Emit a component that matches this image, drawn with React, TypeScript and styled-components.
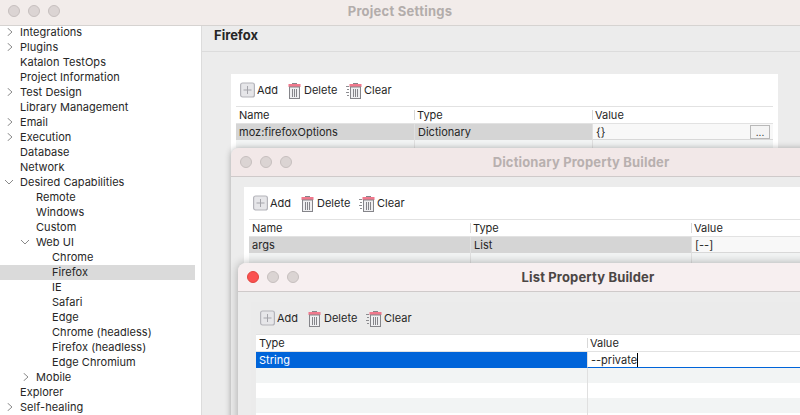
import { createGlobalStyle, styled } from "styled-components";

const GlobalStyle = createGlobalStyle`
	html, body {
		margin: 0;
		padding: 0;
		background: #ececec;
		font-family: "Inter", "Liberation Sans", sans-serif;
		font-size: 11px;
		color: #262626;
	}
`;

interface TreeItem {
	label: string;
	level: number;
	arrow?: "closed" | "open";
	selected?: boolean;
}

const Tree: TreeItem[] = [
	{ label: "Integrations", level: 0, arrow: "closed" },
	{ label: "Plugins", level: 0, arrow: "closed" },
	{ label: "Katalon TestOps", level: 0 },
	{ label: "Project Information", level: 0 },
	{ label: "Test Design", level: 0, arrow: "closed" },
	{ label: "Library Management", level: 0 },
	{ label: "Email", level: 0, arrow: "closed" },
	{ label: "Execution", level: 0, arrow: "closed" },
	{ label: "Database", level: 0 },
	{ label: "Network", level: 0 },
	{ label: "Desired Capabilities", level: 0, arrow: "open" },
	{ label: "Remote", level: 1 },
	{ label: "Windows", level: 1 },
	{ label: "Custom", level: 1 },
	{ label: "Web UI", level: 1, arrow: "open" },
	{ label: "Chrome", level: 2 },
	{ label: "Firefox", level: 2, selected: true },
	{ label: "IE", level: 2 },
	{ label: "Safari", level: 2 },
	{ label: "Edge", level: 2 },
	{ label: "Chrome (headless)", level: 2 },
	{ label: "Firefox (headless)", level: 2 },
	{ label: "Edge Chromium", level: 2 },
	{ label: "Mobile", level: 1, arrow: "closed" },
	{ label: "Explorer", level: 0 },
	{ label: "Self-healing", level: 0, arrow: "closed" },
];

const Arrow = ({ kind, level }: { kind: "closed" | "open"; level: number }) => (
	<ArrowSvg viewBox="0 0 8 8" $left={(kind === "closed" ? 6 : 5) + level * 16}>
		<path d={kind === "closed" ? "M1.5 0 L6 4 L1.5 8" : "M0 2 L4 6 L8 2"} fill="none" stroke="#8a8a8a" strokeWidth="1" />
	</ArrowSvg>
);

const AddIcon = () => (
	<ToolIcon width="15" height="16" viewBox="0 0 15 16">
		<rect x="0.6" y="1" width="13.8" height="14" rx="2" fill="#e6e6e9" stroke="#b4b4ba" strokeWidth="1.2" />
		<path d="M7.5 4 V12 M3.5 8 H11.5" stroke="#a4a4aa" strokeWidth="1" />
	</ToolIcon>
);

const BinShape = () => (
	<>
		<path d="M4 1.5 H9" stroke="#85858a" strokeWidth="1" />
		<rect x="0.5" y="2" width="12" height="3" fill="#f0788c" />
		<rect x="1.5" y="5" width="10" height="11.5" fill="#efeff1" stroke="#85858a" />
		<path d="M4.5 7 V15 M6.5 7 V15 M8.5 7 V15" stroke="#85858a" strokeWidth="1" />
	</>
);

const BinIcon = () => (
	<ToolIcon width="14" height="17" viewBox="0 0 14 17">
		<BinShape />
	</ToolIcon>
);

const ClearIcon = () => (
	<ToolIcon width="16" height="17" viewBox="0 0 16 17">
		<path d="M0 4.5 H3 M1 7.5 H3 M0 10.5 H3 M1 13.5 H3" stroke="#8c8c90" strokeWidth="1" />
		<g transform="translate(3 0)">
			<BinShape />
		</g>
	</ToolIcon>
);

const Toolbar = () => (
	<ToolRow>
		<ToolButton $width={48}><AddIcon />Add</ToolButton>
		<ToolButton $width={58}><BinIcon />Delete</ToolButton>
		<ToolButton $width={50}><ClearIcon />Clear</ToolButton>
	</ToolRow>
);

const Lights = ({ active }: { active?: boolean }) => (
	<LightRow>
		<Light $color={active ? "#fb5150" : undefined} />
		<Light />
		<Light />
	</LightRow>
);

const App = () => {
	return (
		<Desktop>
			<GlobalStyle />
			<MainWindow>
				<MainTitle>Project Settings</MainTitle>
				<MainLights><Lights /></MainLights>
				<MainBody>
					<Sidebar>
						{Tree.map((item) => (
							<TreeRow key={item.label} $level={item.level} $selected={item.selected}>
								{item.arrow && <Arrow kind={item.arrow} level={item.level} />}
								{item.label}
							</TreeRow>
						))}
					</Sidebar>
					<Content>
						<PageHeader>Firefox</PageHeader>
						<PagePanel>
							<Toolbar />
							<Table $columns="178px 178px 181px">
								<HeadCell>Name</HeadCell>
								<HeadCell>Type</HeadCell>
								<HeadCell>Value</HeadCell>
								<GreyCell>moz:firefoxOptions</GreyCell>
								<GreyCell>Dictionary</GreyCell>
								<ValueCell>
									{"{}"}
									<MoreButton>...</MoreButton>
								</ValueCell>
								<StripeCell />
								<StripeCell />
								<StripeCell />
							</Table>
						</PagePanel>
					</Content>
				</MainBody>
			</MainWindow>

			<Dialog $left={231} $top={148}>
				<DialogTitle>Dictionary Property Builder<DialogLights><Lights /></DialogLights></DialogTitle>
				<DialogBody>
					<Panel>
						<Toolbar />
						<Table $columns="221px 221px 240px">
							<HeadCell>Name</HeadCell>
							<HeadCell>Type</HeadCell>
							<HeadCell>Value</HeadCell>
							<GreyCell>args</GreyCell>
							<GreyCell>List</GreyCell>
							<ValueCell>[--]</ValueCell>
							<StripeCell />
							<StripeCell />
							<StripeCell />
						</Table>
					</Panel>
				</DialogBody>
			</Dialog>

			<Dialog $left={238} $top={263} $active>
				<DialogTitle $active>List Property Builder<DialogLights><Lights active /></DialogLights></DialogTitle>
				<DialogBody>
					<Panel $grey>
						<Toolbar />
						<Table $columns="331px 360px">
							<HeadCell>Type</HeadCell>
							<HeadCell>Value</HeadCell>
							<BlueCell>String</BlueCell>
							<EditCell><Caret>--private</Caret></EditCell>
							<StripeCell $height={15} />
							<StripeCell $height={15} />
							<BlankCell />
							<BlankCell />
							<StripeCell $height={15} />
							<StripeCell $height={15} />
							<BlankCell />
							<BlankCell />
						</Table>
					</Panel>
				</DialogBody>
			</Dialog>
		</Desktop>
	);
};
export default App;

const Desktop = styled.div`
	position: relative;
	width: 800px;
	height: 415px;
	overflow: hidden;
`;

const MainWindow = styled.div`
	display: flex;
	flex-direction: column;
	height: 415px;
`;

const MainTitle = styled.div`
	position: relative;
	z-index: 1;
	height: 25px;
	flex: none;
	line-height: 23px;
	text-align: center;
	font-size: 13px;
	font-weight: 700;
	letter-spacing: 0.25px;
	color: #b3adab;
	background: #f2ecea;
	box-shadow: 0 1px 0 #d6d3d1;
`;

const MainLights = styled.div`
	position: absolute;
	z-index: 2;
	left: 8px;
	top: 5px;
`;

const LightRow = styled.div`
	display: flex;
	gap: 8px;
`;

const Light = styled.span<{ $color?: string }>`
	width: 12px;
	height: 12px;
	border-radius: 50%;
	box-sizing: border-box;
	background: ${(p) => p.$color ?? "#dbd4d3"};
	border: 1px solid ${(p) => (p.$color ? "#e0443e" : "#c6bfbe")};
`;

const MainBody = styled.div`
	display: flex;
	flex: 1;
	min-height: 0;
`;

const Sidebar = styled.div`
	width: 202px;
	flex: none;
	box-sizing: border-box;
	padding: 0 6px 0 0;
	background: #fff;
	border-right: 1px solid #dcdcdc;
	letter-spacing: 0.05px;
`;

const TreeRow = styled.div<{ $level: number; $selected?: boolean }>`
	position: relative;
	height: 15px;
	line-height: 15px;
	white-space: nowrap;
	padding-left: ${(p) => 20 + p.$level * 16}px;
	background: ${(p) => (p.$selected ? "#dadada" : "transparent")};
`;

const ArrowSvg = styled.svg<{ $left: number }>`
	position: absolute;
	left: ${(p) => p.$left}px;
	top: 3px;
	width: 8px;
	height: 8px;
`;

const Content = styled.div`
	flex: 1;
	min-width: 0;
	background: #ececec;
`;

const PageHeader = styled.div`
	height: 27px;
	box-sizing: border-box;
	padding: 0 0 0 12px;
	line-height: 20px;
	font-size: 13px;
	font-weight: 700;
	border-bottom: 1px solid #dcdcdc;
`;

const PagePanel = styled.div`
	width: 547px;
	margin: 22px 0 0 29px;
	box-sizing: border-box;
	padding: 0 5px;
	height: 300px;
	background: #fff;
`;

const ToolRow = styled.div`
	display: flex;
	align-items: center;
	height: 32px;
	padding-left: 4px;
`;

const ToolButton = styled.div<{ $width: number }>`
	display: flex;
	align-items: center;
	gap: 2px;
	width: ${(p) => p.$width}px;
	flex: none;
`;

const ToolIcon = styled.svg`
	flex: none;
`;

const Table = styled.div<{ $columns: string }>`
	display: grid;
	grid-template-columns: ${(p) => p.$columns};
	border-top: 1px solid #e2e2e2;
	background: #fff;
`;

const Cell = styled.div`
	height: 16px;
	line-height: 16px;
	box-sizing: border-box;
	padding-left: 3px;
	white-space: nowrap;
`;

const HeadCell = styled(Cell)`
	height: 17px;
	background: #fff;
	border-bottom: 1px solid #e2e2e2;
	position: relative;

	&:not(:first-child)::before {
		content: "";
		position: absolute;
		left: 0;
		top: 3px;
		bottom: 3px;
		width: 1px;
		background: #d8d8d8;
	}
`;

const GreyCell = styled(Cell)`
	background: #d5d5d5;

	& + & {
		border-left: 1px solid #e0e0e0;
	}
`;

const ValueCell = styled(Cell)`
	position: relative;
	background: #f8f8f8;
	border-left: 1px solid #e0e0e0;
	border-bottom: 1px solid #d8d8d8;
`;

const MoreButton = styled.div`
	position: absolute;
	right: 3px;
	top: 1px;
	width: 20px;
	height: 14px;
	box-sizing: border-box;
	border: 1px solid #b8b8b8;
	background: #f4f4f4;
	line-height: 13px;
	text-align: center;
	font-size: 10px;
`;

const StripeCell = styled(Cell)<{ $height?: number }>`
	height: ${(p) => p.$height ?? 16}px;
	background: #f2f4f4;

	& + & {
		border-left: 1px solid #e0e0e0;
	}
`;

const BlankCell = styled(Cell)`
	height: 15px;
	background: #fff;

	& + & {
		border-left: 1px solid #e0e0e0;
	}
`;

const BlueCell = styled(Cell)`
	background: #0064d9;
	color: #fff;
`;

const EditCell = styled(Cell)`
	background: #fff;
	border-left: 1px solid #e0e0e0;
	border-bottom: 1px solid #0064d9;
`;

const Caret = styled.span`
	border-right: 1px solid #000;
`;

const Dialog = styled.div<{ $left: number; $top: number; $active?: boolean }>`
	position: absolute;
	z-index: 3;
	left: ${(p) => p.$left}px;
	top: ${(p) => p.$top}px;
	width: 700px;
	height: 420px;
	border-radius: 8px 8px 0 0;
	overflow: hidden;
	background: #ececec;
	box-shadow: 0 0 ${(p) => (p.$active ? 10 : 6)}px rgba(0, 0, 0, 0.3);
`;

const DialogTitle = styled.div<{ $active?: boolean }>`
	position: relative;
	height: 29px;
	box-sizing: border-box;
	line-height: 28px;
	text-align: center;
	font-size: 13px;
	font-weight: 700;
	letter-spacing: 0.15px;
	color: ${(p) => (p.$active ? "#4c4645" : "#b8b0af")};
	background: ${(p) => (p.$active ? "#f7eff0" : "#f2e8e8")};
	border-bottom: 1px solid #cfcaca;
`;

const DialogLights = styled.div`
	position: absolute;
	left: 9px;
	top: 8px;
`;

const DialogBody = styled.div`
	padding: 10px 0 0 13px;
`;

const Panel = styled.div<{ $grey?: boolean }>`
	box-sizing: border-box;
	padding: 0 0 0 5px;
	background: ${(p) => (p.$grey ? "#ebebeb" : "#fff")};
	height: 300px;
`;
